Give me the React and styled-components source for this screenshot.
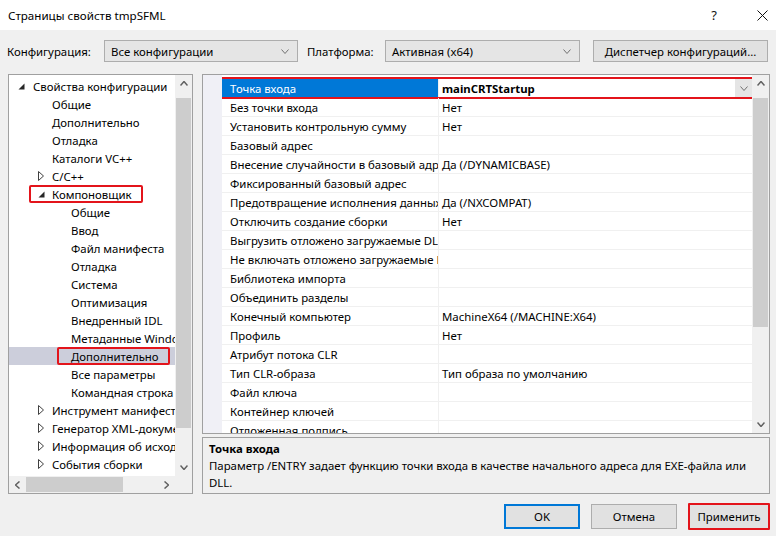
import React from 'react';
import styled, { createGlobalStyle, css } from 'styled-components';

const GlobalStyle = createGlobalStyle`
  html, body { margin: 0; padding: 0; }
  body {
    width: 776px; height: 536px; overflow: hidden;
    font-family: "Noto Sans", "DejaVu Sans", sans-serif;
    font-size: 11.4px; color: #000;
  }
  * { box-sizing: border-box; }
`;

const RED = '#e3141b';

const Window = styled.div`
  width: 776px; height: 536px;
  display: flex; flex-direction: column;
  background: #f0f0f0;
`;

const TitleBar = styled.div`
  height: 30px; flex: none;
  background: #fff;
  display: flex; align-items: center;
  padding: 0 7px 0 8px;
`;
const Title = styled.div`
  flex: 1; font-size: 11.6px;
`;
const TitleGlyph = styled.div`
  width: 14px; height: 14px;
  display: flex; align-items: center; justify-content: center;
  font-size: 13px; color: #111;
  margin-left: ${p => p.$ml || 0}px;
`;

const Toolbar = styled.div`
  display: flex; align-items: center;
  height: 22px; margin: 10px 0 0 7px;
`;
const Label = styled.div`
  width: ${p => p.$w}px; margin-left: ${p => p.$ml || 0}px;
  white-space: nowrap;
`;
const Combo = styled.div`
  width: ${p => p.$w}px; height: 22px;
  border: 1px solid #adadad; background: #e5e5e5;
  display: flex; align-items: center; justify-content: space-between;
  padding: 0 8px 0 6px;
`;
const PushButton = styled.div`
  width: ${p => p.$w}px; height: ${p => p.$h || 22}px;
  margin-left: ${p => p.$ml || 0}px;
  border: ${p => (p.$default ? '2px solid #0078d7' : '1px solid #adadad')};
  background: #e1e1e1;
  display: flex; align-items: center; justify-content: center;
  white-space: nowrap; position: relative;
  ${p => p.$marked && css`
    &::after {
      content: ''; position: absolute;
      inset: -2px -2px -2px -2px;
      border: 2px solid ${RED}; border-radius: 1px;
    }
  `}
`;

const Main = styled.div`
  display: flex; height: 420px; margin: 12px 0 0 8px;
`;

const TreePanel = styled.div`
  width: 185px; height: 100%;
  border: 1px solid #a0a0a0; background: #fff;
  display: grid;
  grid-template-columns: 1fr 17px;
  grid-template-rows: 1fr 17px;
`;
const TreeContent = styled.div`
  overflow: hidden; padding-top: 2px;
`;
const TreeRow = styled.div`
  position: relative;
  height: 18px; display: flex; align-items: center;
  padding-left: ${p => 8 + 19 * p.$level}px;
  white-space: nowrap;
  background: ${p => (p.$selected ? '#cccedb' : 'transparent')};
`;
const Expander = styled.span`
  width: 16px; flex: none; height: 18px;
  display: flex; align-items: center; padding-left: ${p => p.$pl}px;
`;
const Annotation = styled.span`
  position: absolute; top: 0; height: 18px;
  left: ${p => p.$left}px; width: ${p => p.$width}px;
  border: 2px solid ${RED}; border-radius: 2px;
`;

const VScroll = styled.div`
  width: 17px; background: #f0f0f0;
  display: flex; flex-direction: column;
`;
const HScroll = styled.div`
  height: 17px; background: #f0f0f0;
  display: flex;
`;
const ScrollArrow = styled.div`
  width: 17px; height: 17px; flex: none;
  display: flex; align-items: center; justify-content: center;
`;
const VTrack = styled.div`
  flex: 1; padding: ${p => p.$offset}px 1px 0;
`;
const VThumb = styled.div`
  height: ${p => p.$size}px; background: #cdcdcd;
`;
const HTrack = styled.div`
  flex: 1; padding: 1px 0 1px ${p => p.$offset}px;
  display: flex;
`;
const HThumb = styled.div`
  width: ${p => p.$size}px; background: #cdcdcd;
`;
const Corner = styled.div`
  background: #f0f0f0;
`;

const RightColumn = styled.div`
  width: 568px; margin-left: 9px;
  display: flex; flex-direction: column;
`;
const GridPanel = styled.div`
  height: 360px; flex: none;
  border: 1px solid #a0a0a0; background: #fff;
  display: flex;
`;
const Gutter = styled.div`
  width: 19px; flex: none; background: #f0f0f6;
`;
const GridTable = styled.div`
  flex: 1; overflow: hidden; padding-top: 4px;
`;
const GridRow = styled.div`
  position: relative;
  display: grid; grid-template-columns: 217px 1fr;
  height: 19px;
  border-bottom: 1px solid #f0f0f0;
  ${p => p.$selected && css`
    &::after {
      content: ''; position: absolute;
      inset: -2px -3px -2px -2px;
      border: 2px solid ${RED}; border-radius: 2px;
    }
  `}
`;
const NameCell = styled.div`
  padding-left: 8px; overflow: hidden; white-space: nowrap;
  display: flex; align-items: center;
  border-right: 1px solid #f0f0f0;
  background: ${p => (p.$selected ? '#0078d7' : 'transparent')};
  color: ${p => (p.$selected ? '#fff' : '#000')};
`;
const ValueCell = styled.div`
  padding-left: 3px; overflow: hidden; white-space: nowrap;
  display: flex; align-items: center; justify-content: space-between;
  font-weight: ${p => (p.$bold ? 700 : 400)};
`;
const DropButton = styled.div`
  width: 17px; height: 100%; background: #e5e5e5;
  display: flex; align-items: center; justify-content: center;
`;

const Description = styled.div`
  margin-top: 3px; height: 57px;
  border: 1px solid #a0a0a0; background: #f0f0f0;
  padding: 2px 6px 0;
  line-height: 17px;
`;
const DescTitle = styled.div`
  font-weight: 700;
`;

const Footer = styled.div`
  display: flex; justify-content: flex-end;
  margin-top: 10px; padding-right: 7px;
`;

const Chevron = ({ dir = 'down', w = 8, h = 4, color = '#606060', sw = 1 }) => {
  const pts = {
    down: `0.5,0.5 ${w / 2},${h - 0.5} ${w - 0.5},0.5`,
    up: `0.5,${h - 0.5} ${w / 2},0.5 ${w - 0.5},${h - 0.5}`,
    left: `${w - 0.5},0.5 0.5,${h / 2} ${w - 0.5},${h - 0.5}`,
    right: `0.5,0.5 ${w - 0.5},${h / 2} 0.5,${h - 0.5}`,
  }[dir];
  return (
    <svg width={w} height={h} viewBox={`0 0 ${w} ${h}`} style={{ display: 'block' }}>
      <polyline points={pts} fill="none" stroke={color} strokeWidth={sw} />
    </svg>
  );
};

const Triangle = ({ open }) =>
  open ? (
    <svg width="7" height="7" viewBox="0 0 7 7" style={{ display: 'block' }}>
      <polygon points="6.5,0.5 6.5,6.5 0.5,6.5" fill="#262626" />
    </svg>
  ) : (
    <svg width="6" height="10" viewBox="0 0 6 10" style={{ display: 'block' }}>
      <polygon points="0.5,0.5 5.5,5 0.5,9.5" fill="#fff" stroke="#404040" strokeWidth="1" />
    </svg>
  );

const treeItems = [
  { t: 'Свойства конфигурации', l: 0, open: true },
  { t: 'Общие', l: 1 },
  { t: 'Дополнительно', l: 1 },
  { t: 'Отладка', l: 1 },
  { t: 'Каталоги VC++', l: 1 },
  { t: 'C/C++', l: 1, open: false },
  { t: 'Компоновщик', l: 1, open: true, ann: { left: 20, width: 114 } },
  { t: 'Общие', l: 2 },
  { t: 'Ввод', l: 2 },
  { t: 'Файл манифеста', l: 2 },
  { t: 'Отладка', l: 2 },
  { t: 'Система', l: 2 },
  { t: 'Оптимизация', l: 2 },
  { t: 'Внедренный IDL', l: 2 },
  { t: 'Метаданные Windows', l: 2 },
  { t: 'Дополнительно', l: 2, sel: true, ann: { left: 48, width: 113 } },
  { t: 'Все параметры', l: 2 },
  { t: 'Командная строка', l: 2 },
  { t: 'Инструмент манифеста', l: 1, open: false },
  { t: 'Генератор XML-документов', l: 1, open: false },
  { t: 'Информация об исходном коде', l: 1, open: false },
  { t: 'События сборки', l: 1, open: false },
];

const gridRows = [
  ['Точка входа', 'mainCRTStartup'],
  ['Без точки входа', 'Нет'],
  ['Установить контрольную сумму', 'Нет'],
  ['Базовый адрес', ''],
  ['Внесение случайности в базовый адрес', 'Да (/DYNAMICBASE)'],
  ['Фиксированный базовый адрес', ''],
  ['Предотвращение исполнения данных (DEP)', 'Да (/NXCOMPAT)'],
  ['Отключить создание сборки', 'Нет'],
  ['Выгрузить отложено загружаемые DLL', ''],
  ['Не включать отложено загружаемые DLL', ''],
  ['Библиотека импорта', ''],
  ['Объединить разделы', ''],
  ['Конечный компьютер', 'MachineX64 (/MACHINE:X64)'],
  ['Профиль', 'Нет'],
  ['Атрибут потока CLR', ''],
  ['Тип CLR-образа', 'Тип образа по умолчанию'],
  ['Файл ключа', ''],
  ['Контейнер ключей', ''],
  ['Отложенная подпись', ''],
];

const VerticalScrollbar = ({ offset, size }) => (
  <VScroll>
    <ScrollArrow><Chevron dir="up" w={8} h={5} sw={1.5} /></ScrollArrow>
    <VTrack $offset={offset}><VThumb $size={size} /></VTrack>
    <ScrollArrow><Chevron dir="down" w={8} h={5} sw={1.5} /></ScrollArrow>
  </VScroll>
);

export default function App() {
  return (
    <>
      <GlobalStyle />
      <Window>
        <TitleBar>
          <Title>Страницы свойств tmpSFML</Title>
          <TitleGlyph>?</TitleGlyph>
          <TitleGlyph $ml={34}>
            <svg width="11" height="11" viewBox="0 0 11 11">
              <path d="M0.5 0.5 L10.5 10.5 M10.5 0.5 L0.5 10.5" stroke="#111" strokeWidth="1" fill="none" />
            </svg>
          </TitleGlyph>
        </TitleBar>

        <Toolbar>
          <Label $w={97}>Конфигурация:</Label>
          <Combo $w={194}>
            <span>Все конфигурации</span>
            <Chevron dir="down" w={8} h={5} color="#707070" />
          </Combo>
          <Label $w={78} $ml={9}>Платформа:</Label>
          <Combo $w={195}>
            <span>Активная (x64)</span>
            <Chevron dir="down" w={8} h={5} color="#707070" />
          </Combo>
          <PushButton $w={175} $ml={13}>Диспетчер конфигураций...</PushButton>
        </Toolbar>

        <Main>
          <TreePanel>
            <TreeContent>
              {treeItems.map((it, i) => (
                <TreeRow key={i} $level={it.l} $selected={it.sel}>
                  <Expander $pl={it.l === 0 ? 1 : 2}>
                    {it.open !== undefined && <Triangle open={it.open} />}
                  </Expander>
                  <span>{it.t}</span>
                  {it.ann && <Annotation $left={it.ann.left} $width={it.ann.width} />}
                </TreeRow>
              ))}
            </TreeContent>
            <VerticalScrollbar offset={6} size={330} />
            <HScroll>
              <ScrollArrow><Chevron dir="left" w={5} h={8} sw={1.5} /></ScrollArrow>
              <HTrack $offset={0}><HThumb $size={97} /></HTrack>
              <ScrollArrow><Chevron dir="right" w={5} h={8} sw={1.5} /></ScrollArrow>
            </HScroll>
            <Corner />
          </TreePanel>

          <RightColumn>
            <GridPanel>
              <Gutter />
              <GridTable>
                {gridRows.map(([name, value], i) => (
                  <GridRow key={i} $selected={i === 0}>
                    <NameCell $selected={i === 0}>{name}</NameCell>
                    <ValueCell $bold={i === 0}>
                      <span>{value}</span>
                      {i === 0 && (
                        <DropButton><Chevron dir="down" w={8} h={5} color="#707070" /></DropButton>
                      )}
                    </ValueCell>
                  </GridRow>
                ))}
              </GridTable>
              <VerticalScrollbar offset={6} size={229} />
            </GridPanel>
            <Description>
              <DescTitle>Точка входа</DescTitle>
              <div>Параметр /ENTRY задает функцию точки входа в качестве начального адреса для EXE-файла или DLL.</div>
            </Description>
          </RightColumn>
        </Main>

        <Footer>
          <PushButton $w={76} $h={25} $default>OK</PushButton>
          <PushButton $w={86} $h={25} $ml={11}>Отмена</PushButton>
          <PushButton $w={80} $h={25} $ml={12} $marked>Применить</PushButton>
        </Footer>
      </Window>
    </>
  );
}
